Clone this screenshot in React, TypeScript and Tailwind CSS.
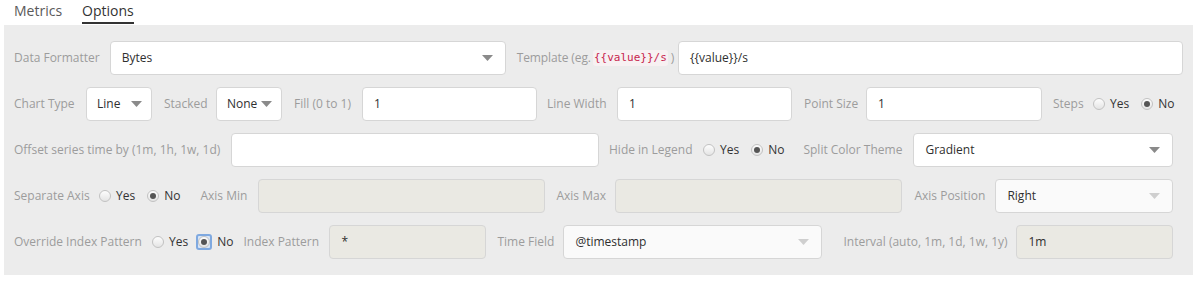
import React from "react";

const font = { fontFamily: '"Open Sans", "Noto Sans", sans-serif' };

function Label({ children, className = "" }: { children: React.ReactNode; className?: string }) {
  return <span className={`text-[12px] text-[#9c9c9c] whitespace-nowrap ${className}`}>{children}</span>;
}

function Caret({ light = false }: { light?: boolean }) {
  return (
    <svg width="11" height="6" viewBox="0 0 11 6" className="shrink-0">
      <path d="M0 0 L11 0 L5.5 6 Z" fill={light ? "#cfcfcf" : "#8a8a8a"} />
    </svg>
  );
}

function Select({ value, w, disabled = false, tight = false }: { value: string; w: string; disabled?: boolean; tight?: boolean }) {
  return (
    <div
      className={`${w} h-[34px] shrink-0 rounded-[4px] border border-[#d6d6d6] flex items-center justify-between ${tight ? "pl-[10px] pr-[9px]" : "pl-[11px] pr-[12px]"} ${disabled ? "bg-[#fafafa]" : "bg-white"}`}
    >
      <span className="text-[12px] text-[#2f2f2f] whitespace-nowrap">{value}</span>
      <Caret light={disabled} />
    </div>
  );
}

function Input({ value = "", w, disabled = false }: { value?: string; w: string; disabled?: boolean }) {
  return (
    <div
      className={`${w} h-[34px] shrink-0 rounded-[4px] border border-[#d6d6d6] flex items-center pl-[11px] ${disabled ? "bg-[#eae9e3]" : "bg-white"}`}
    >
      <span className="text-[12px] text-[#2f2f2f] whitespace-nowrap">{value}</span>
    </div>
  );
}

function Radio({ checked = false, focused = false }: { checked?: boolean; focused?: boolean }) {
  const circle = (
    <span className="w-[12px] h-[12px] rounded-full border border-[#c2c2c2] bg-gradient-to-b from-[#fdfdfd] to-[#e4e4e4] flex items-center justify-center">
      {checked && <span className="w-[6px] h-[6px] rounded-full bg-[#555]" />}
    </span>
  );
  if (focused) {
    return (
      <span className="w-[16px] h-[16px] rounded-[3px] border-2 border-[#7fa9e0] bg-[#d7e5f7] flex items-center justify-center">
        {circle}
      </span>
    );
  }
  return circle;
}

function RadioPair({ yes = false, focusNo = false }: { yes?: boolean; focusNo?: boolean }) {
  return (
    <div className="flex items-center shrink-0">
      <span className="flex items-center gap-[5px]">
        <Radio checked={yes} />
        <span className="text-[12px] text-[#333]">Yes</span>
      </span>
      <span className={`flex items-center gap-[5px] ${focusNo ? "ml-[8px]" : "ml-[12px]"}`}>
        <Radio checked={!yes} focused={focusNo} />
        <span className="text-[12px] text-[#333]">No</span>
      </span>
    </div>
  );
}

export default function App() {
  return (
    <div className="w-[1203px] h-[283px] bg-white" style={font}>
      <div className="h-[25px] flex items-start pl-[14px]">
        <span className="text-[14px] text-[#5a5a5a] leading-[22px] mr-[20px]">Metrics</span>
        <span className="text-[14px] text-[#333] leading-[22px] border-b-2 border-[#333]">Options</span>
      </div>
      <div className="ml-[4px] w-[1189px] bg-[#ececec] pt-[16px] pb-[16px] pl-[10px] pr-[10px] flex flex-col gap-[12px]">
        {/* Row 1 */}
        <div className="flex items-center h-[34px]">
          <Label className="w-[96px]">Data Formatter</Label>
          <Select value="Bytes" w="w-[396px]" />
          <Label className="ml-[11px] w-[162px] flex items-center tracking-[-0.1px]">
            Template (eg.
            <code className="ml-[2px] mr-[3px] text-[11px] tracking-normal text-[#c7254e] bg-[#f7f1f2] px-[1px] rounded-[3px] leading-[16px]" style={{ fontFamily: '"DejaVu Sans Mono", monospace' }}>
              {"{{value}}/s"}
            </code>
            )
          </Label>
          <Input value="{{value}}/s" w="w-[505px]" />
        </div>
        {/* Row 2 */}
        <div className="flex items-center h-[34px]">
          <Label className="w-[72px]">Chart Type</Label>
          <Select value="Line" w="w-[66px]" tight />
          <Label className="ml-[12px] w-[52px]">Stacked</Label>
          <Select value="None" w="w-[66px]" tight />
          <Label className="ml-[12px] w-[68px]">Fill (0 to 1)</Label>
          <Input value="1" w="w-[175px]" />
          <Label className="ml-[10px] w-[70px]">Line Width</Label>
          <Input value="1" w="w-[175px]" />
          <Label className="ml-[12px] w-[62px]">Point Size</Label>
          <Input value="1" w="w-[176px]" />
          <Label className="ml-[11px] w-[40px]">Steps</Label>
          <RadioPair />
        </div>
        {/* Row 3 */}
        <div className="flex items-center h-[34px]">
          <Label className="w-[217px]">Offset series time by (1m, 1h, 1w, 1d)</Label>
          <Input w="w-[368px]" />
          <Label className="ml-[10px] w-[94px]">Hide in Legend</Label>
          <RadioPair />
          <Label className="ml-[19px] w-[110px]">Split Color Theme</Label>
          <Select value="Gradient" w="w-[260px]" />
        </div>
        {/* Row 4 */}
        <div className="flex items-center h-[34px]">
          <Label className="w-[85px]">Separate Axis</Label>
          <RadioPair />
          <Label className="ml-[20px] w-[58px]">Axis Min</Label>
          <Input w="w-[287px]" disabled />
          <Label className="ml-[11px] w-[59px]">Axis Max</Label>
          <Input w="w-[287px]" disabled />
          <Label className="ml-[12px] w-[81px]">Axis Position</Label>
          <Select value="Right" w="w-[178px]" disabled />
        </div>
        {/* Row 5 */}
        <div className="flex items-center h-[34px]">
          <Label className="w-[138px]">Override Index Pattern</Label>
          <RadioPair focusNo />
          <Label className="ml-[10px] w-[86px]">Index Pattern</Label>
          <Input value="*" w="w-[157px]" disabled />
          <Label className="ml-[11px] w-[66px]">Time Field</Label>
          <Select value="@timestamp" w="w-[259px]" disabled />
          <Label className="ml-[21px] w-[173px]">Interval (auto, 1m, 1d, 1w, 1y)</Label>
          <Input value="1m" w="w-[157px]" disabled />
        </div>
      </div>
    </div>
  );
}
